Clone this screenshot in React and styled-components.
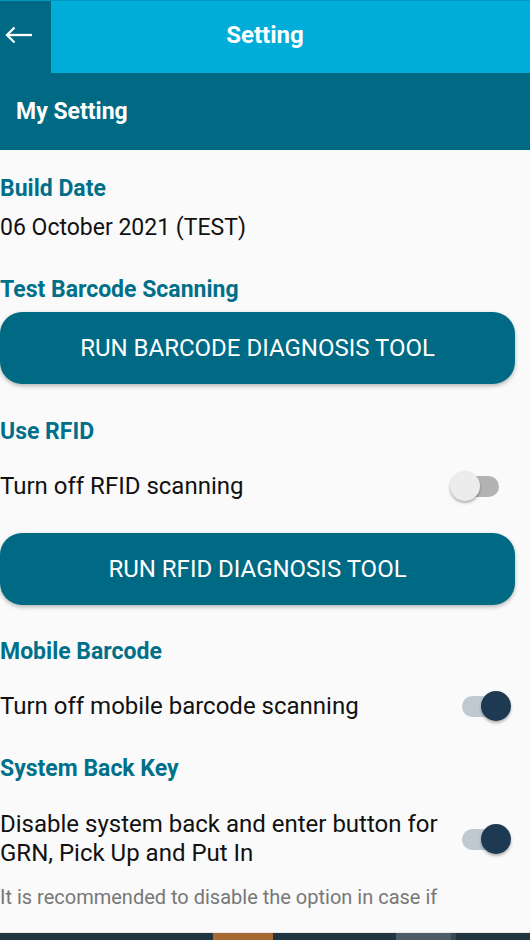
import React, { useState } from 'react';
import styled, { createGlobalStyle } from 'styled-components';

const GlobalStyle = createGlobalStyle`
  html, body {
    margin: 0;
    padding: 0;
    background: #fafafa;
  }
  body {
    font-family: Roboto, "Noto Sans", Arial, sans-serif;
  }
`;

const Page = styled.div`
  width: 530px;
  height: 940px;
  display: flex;
  flex-direction: column;
  overflow: hidden;
  background: #fafafa;
`;

const TopBar = styled.div`
  height: 73px;
  display: flex;
  position: relative;
  background: #00acd8;
  border-top: 1px solid #0096bf;
  box-sizing: border-box;
`;

const BackBtn = styled.button`
  width: 51px;
  height: 100%;
  border: none;
  padding: 0 0 4px 5px;
  background: #006a85;
  display: flex;
  align-items: center;
  justify-content: flex-start;
  cursor: pointer;
  position: relative;
  z-index: 1;
`;

const Title = styled.h1`
  position: absolute;
  inset: 0;
  margin: 0;
  padding-bottom: 4px;
  display: flex;
  align-items: center;
  justify-content: center;
  color: #fff;
  font-size: 24px;
  font-weight: 700;
`;

const SubBar = styled.div`
  height: 77px;
  background: #006a85;
  display: flex;
  align-items: center;
  padding-left: 16px;
  color: #fff;
  font-size: 23px;
  font-weight: 700;
  padding-bottom: 1px;
  box-sizing: border-box;
`;

const Content = styled.div`
  flex: 1;
  padding-top: 25px;
`;

const Heading = styled.h2`
  margin: ${p => p.$mt || 0}px 0 0;
  color: #00708a;
  font-size: 23px;
  font-weight: 700;
  line-height: 28px;
`;

const Text = styled.p`
  margin: ${p => p.$mt || 0}px 0 0;
  color: #111;
  font-size: 23px;
  line-height: 28px;
`;

const ActionButton = styled.button`
  display: block;
  margin-top: ${p => p.$mt}px;
  width: 515px;
  height: 72px;
  border: none;
  border-radius: 22px;
  background: #006a85;
  color: #fff;
  font-family: inherit;
  font-size: 24px;
  font-weight: 400;
  box-shadow: 0 2px 4px rgba(0, 0, 0, 0.28);
  cursor: pointer;
`;

const Row = styled.div`
  margin-top: ${p => p.$mt}px;
  min-height: 40px;
  display: flex;
  align-items: center;
  justify-content: space-between;
  padding-right: ${p => p.$pr}px;
`;

const RowText = styled.span`
  color: #111;
  font-size: 24px;
  line-height: 29px;
`;

const Track = styled.button`
  position: relative;
  flex: none;
  width: 49px;
  height: 21px;
  border: none;
  padding: 0;
  border-radius: 11px;
  background: ${p => (p.$on ? '#bfc9d1' : '#b3b3b3')};
  cursor: pointer;
`;

const Thumb = styled.span`
  position: absolute;
  top: 50%;
  left: ${p => (p.$on ? '34px' : '15px')};
  width: 30px;
  height: 30px;
  border-radius: 50%;
  transform: translate(-50%, -50%);
  background: ${p => (p.$on ? '#1d3a52' : '#ececec')};
  box-shadow: 0 2px 3px rgba(0, 0, 0, 0.3);
`;

const Note = styled.p`
  margin: 16px 0 0;
  color: #777;
  font-size: 20px;
  line-height: 26px;
`;

const NavStrip = styled.div`
  height: 7px;
  display: flex;
  background: #213540;
  border-top: 1px solid #e8e8e8;
`;

const Seg = styled.div`
  width: ${p => p.$w}px;
  background: ${p => p.$c};
`;

function Toggle({ on, onClick }) {
  return (
    <Track $on={on} onClick={onClick}>
      <Thumb $on={on} />
    </Track>
  );
}

export default function App() {
  const [rfid, setRfid] = useState(false);
  const [mobile, setMobile] = useState(true);
  const [backKey, setBackKey] = useState(true);

  return (
    <Page>
      <GlobalStyle />
      <TopBar>
        <BackBtn>
          <svg width="28" height="18" viewBox="0 0 28 18" fill="none" stroke="#fff" strokeWidth="2.3">
            <path d="M2 9h25" />
            <path d="M9.5 1.5L2 9l7.5 7.5" />
          </svg>
        </BackBtn>
        <Title>Setting</Title>
      </TopBar>
      <SubBar>My Setting</SubBar>
      <Content>
        <Heading>Build Date</Heading>
        <Text $mt={11}>06 October 2021 (TEST)</Text>

        <Heading $mt={34}>Test Barcode Scanning</Heading>
        <ActionButton $mt={8}>RUN BARCODE DIAGNOSIS TOOL</ActionButton>

        <Heading $mt={34}>Use RFID</Heading>
        <Row $mt={20} $pr={31}>
          <RowText>Turn off RFID scanning</RowText>
          <Toggle on={rfid} onClick={() => setRfid(!rfid)} />
        </Row>
        <ActionButton $mt={27}>RUN RFID DIAGNOSIS TOOL</ActionButton>

        <Heading $mt={33}>Mobile Barcode</Heading>
        <Row $mt={20} $pr={19}>
          <RowText>Turn off mobile barcode scanning</RowText>
          <Toggle on={mobile} onClick={() => setMobile(!mobile)} />
        </Row>

        <Heading $mt={29}>System Back Key</Heading>
        <Row $mt={27} $pr={19}>
          <RowText>
            Disable system back and enter button for
            <br />
            GRN, Pick Up and Put In
          </RowText>
          <Toggle on={backKey} onClick={() => setBackKey(!backKey)} />
        </Row>

        <Note>It is recommended to disable the option in case if</Note>
      </Content>
      <NavStrip>
        <Seg $w={213} $c="#213540" />
        <Seg $w={60} $c="#a86a35" />
        <Seg $w={123} $c="#213540" />
        <Seg $w={55} $c="#4f5d68" />
        <Seg $w={5} $c="#3a4650" />
      </NavStrip>
    </Page>
  );
}
